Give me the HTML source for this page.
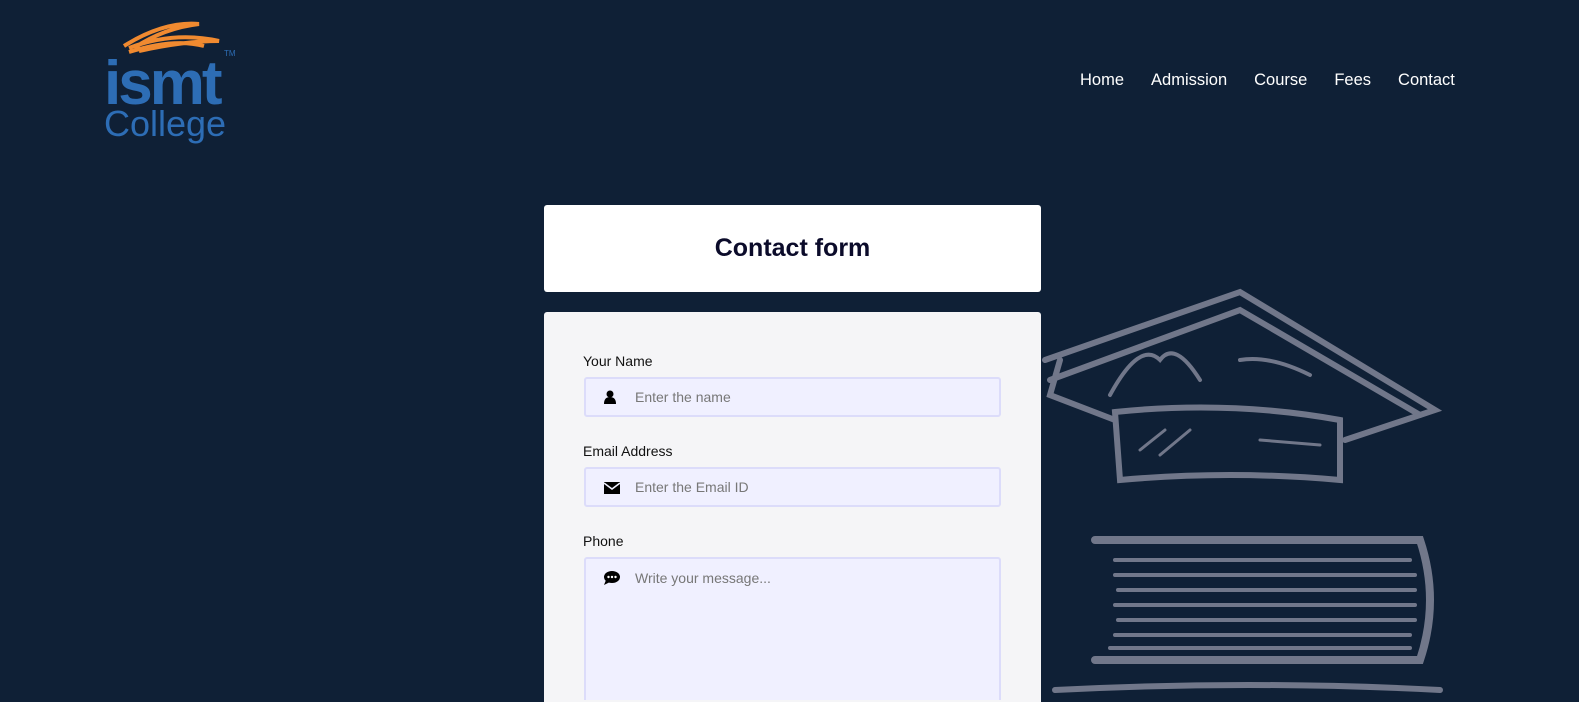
<!DOCTYPE html>
<html><head><meta charset="utf-8"><style>
*{box-sizing:border-box;margin:0;padding:0}
html,body{width:1579px;height:702px;overflow:hidden}
body{background:#0f2036;font-family:"Liberation Sans",sans-serif;position:relative}
.nav{position:absolute;top:71px;left:1080px;display:flex;gap:27px;color:#fff;font-size:16.5px}
.logo{position:absolute;left:104px;top:16px}
.card1{position:absolute;left:544px;top:205px;width:497px;height:87px;background:#fff;border-radius:3px;text-align:center;font-weight:bold;font-size:25px;color:#0b0b2a;line-height:87px}
.card2{position:absolute;left:544px;top:312px;width:497px;height:390px;background:#f5f5f7;border-radius:3px 3px 0 0;overflow:hidden}
.lbl{position:absolute;left:39px;font-size:14px;color:#111}
.inp{position:absolute;left:40px;width:417px;height:40px;background:#f0f0ff;border:2px solid #dcdcfa;border-radius:3px;font-size:14px;color:#777;padding-left:49px;line-height:36px}
.ic{position:absolute;left:18px;top:11px}
</style></head><body>
<svg style="position:absolute;left:0;top:0" width="1579" height="702" fill="none" stroke="#71778a" stroke-width="6" stroke-linecap="round">
<path d="M1045 360 L1240 292 L1435 410 L1345 440"/>
<path d="M1050 380 L1240 310 L1420 415"/>
<path d="M1060 360 L1050 395 L1115 420"/>
<path d="M1115 412 Q1230 400 1340 420 L1340 480 Q1230 470 1120 480 Z"/>
<path d="M1110 395 Q1140 340 1160 360 Q1175 340 1200 380 M1240 360 Q1270 355 1310 375" stroke-width="4"/>
<path d="M1140 450 L1165 430 M1160 455 L1190 430 M1260 440 L1320 445" stroke-width="3"/>
<path d="M1095 540 L1420 540 Q1440 600 1420 660 L1095 660" stroke-width="8"/>
<path d="M1115 560 L1410 560 M1115 575 L1415 575 M1118 590 L1415 590 M1115 605 L1415 605 M1118 620 L1415 620 M1115 635 L1410 635 M1110 648 L1410 648" stroke-width="4"/>
<path d="M1055 690 Q1250 680 1440 690" stroke-width="6"/>
</svg>
<div class="logo"><svg width="140" height="130">
<path d="M20 30 Q60 5 95 8 Q60 12 30 32 M25 32 Q70 15 115 25 Q80 25 35 35 M25 36 Q70 22 100 30" stroke="#f08a30" stroke-width="4" fill="none"/>
<text x="0" y="88" font-family="Liberation Sans" font-weight="bold" font-size="62" fill="#2d6db5" letter-spacing="-3">ismt</text>
<text x="0" y="120" font-family="Liberation Sans" font-size="36" fill="#2d6db5">College</text>
<text x="120" y="40" font-size="8" fill="#2d6db5">TM</text>
</svg></div>
<div class="nav"><span>Home</span><span>Admission</span><span>Course</span><span>Fees</span><span>Contact</span></div>
<div class="card1">Contact form</div>
<div class="card2">
<div class="lbl" style="top:41px">Your Name</div>
<div class="inp" style="top:65px"><svg class="ic" width="12" height="14"><circle cx="6" cy="4" r="3.5" fill="#000"/><path d="M0 14 Q0 7 6 7 Q12 7 12 14Z" fill="#000"/></svg>Enter the name</div>
<div class="lbl" style="top:131px">Email Address</div>
<div class="inp" style="top:155px"><svg class="ic" width="16" height="13" style="top:13px"><rect width="16" height="12" fill="#000"/><path d="M0 1 L8 7 L16 1" stroke="#f0f0ff" stroke-width="1.5" fill="none"/></svg>Enter the Email ID</div>
<div class="lbl" style="top:221px">Phone</div>
<div class="inp" style="top:245px;height:143px;line-height:38px;border-bottom:none;border-radius:3px 3px 0 0"><svg class="ic" width="16" height="14" style="top:12px"><ellipse cx="8" cy="6" rx="8" ry="6" fill="#000"/><path d="M2 9 L0 14 L6 11Z" fill="#000"/><circle cx="4.5" cy="6" r="1.2" fill="#fff"/><circle cx="8" cy="6" r="1.2" fill="#fff"/><circle cx="11.5" cy="6" r="1.2" fill="#fff"/></svg>Write your message...</div>
</div>
</body></html>
